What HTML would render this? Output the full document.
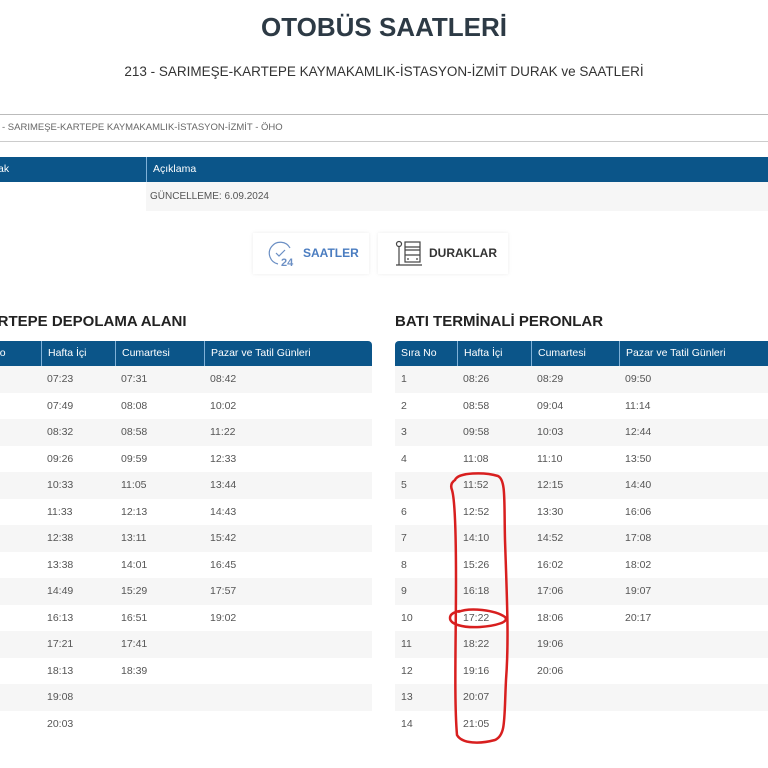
<!DOCTYPE html>
<html><head><meta charset="utf-8"><style>
*{margin:0;padding:0;box-sizing:border-box}
body{width:768px;height:768px;overflow:hidden;background:#fff;font-family:"Liberation Sans",sans-serif;color:#555;position:relative}
.a{position:absolute;white-space:nowrap}
.hd{position:absolute;height:25px;background:#0b5589;color:#fff;font-size:10.5px;border-radius:4px 4px 0 0}
.hd span,.r span{position:absolute;top:0;height:100%;padding-left:6px;line-height:25px}
.hd span{border-left:1px solid #7fb1d8}
.hd span:first-child{border-left:none}
.r{position:absolute;height:26.5px;font-size:10.5px;color:#555}
.r span{line-height:26.5px}
.g{background:#f6f6f6}
.L{left:-36px;width:408px}.R{left:395px;width:380px}
.L span:nth-child(2){left:77px}.L span:nth-child(3){left:151px}.L span:nth-child(4){left:240px}
.R span:nth-child(2){left:62px}.R span:nth-child(3){left:136px}.R span:nth-child(4){left:224px}
.btn{position:absolute;top:233px;height:41px;background:#fff;box-shadow:0 0 4px rgba(0,0,0,.08);font-weight:bold;font-size:12px;line-height:41px}
</style></head><body>
<div class="a" style="left:0;width:768px;top:12px;text-align:center;font-size:26px;font-weight:bold;color:#2d3a45">OTOBÜS SAATLERİ</div>
<div class="a" style="left:0;width:768px;top:64px;text-align:center;font-size:13.5px;color:#333">213 - SARIMEŞE-KARTEPE KAYMAKAMLIK-İSTASYON-İZMİT DURAK ve SAATLERİ</div>
<div class="a" style="left:0;top:114px;width:768px;height:28px;border-top:1px solid #bbb;border-bottom:1px solid #ccc;font-size:9.5px;line-height:26px;padding-left:2px;color:#666">- SARIMEŞE-KARTEPE KAYMAKAMLIK-İSTASYON-İZMİT - ÖHO</div>
<div class="hd" style="left:-10px;top:157px;width:778px;border-radius:0"><span style="left:0;width:156px;padding-left:8px">ak</span><span style="left:156px">Açıklama</span></div>
<div class="a" style="left:146px;top:182px;width:622px;height:29px;background:#f6f6f6;font-size:10px;line-height:29px;padding-left:4px;color:#555">GÜNCELLEME: 6.09.2024</div>
<div class="btn" style="left:253px;width:116px">
<svg style="position:absolute;left:15px;top:7px" width="28" height="28" viewBox="0 0 28 28" fill="none" stroke="#6b8fc4" stroke-width="1.2"><path d="M22 8A11 11 0 1 0 10 24"/><path d="M8 13l3 3 6-6"/><text x="13" y="26" font-size="11" fill="#6b8fc4" stroke="none" font-family="Liberation Sans">24</text></svg>
<span style="position:absolute;left:50px;color:#4a7cc0">SAATLER</span></div>
<div class="btn" style="left:378px;width:130px">
<svg style="position:absolute;left:17px;top:7px" width="28" height="28" viewBox="0 0 28 28" fill="none" stroke="#444" stroke-width="1.2"><circle cx="4" cy="4" r="2.5"/><path d="M4 7v18M1 25h26"/><rect x="10" y="2" width="15" height="20"/><path d="M10 7h15M10 10h15M10 15h15M12 19h2M21 19h2"/></svg>
<span style="position:absolute;left:51px;color:#333">DURAKLAR</span></div>
<div class="a" style="left:-24px;top:313px;font-size:15px;font-weight:bold;color:#222">KARTEPE DEPOLAMA ALANI</div>
<div class="a" style="left:395px;top:313px;font-size:15px;font-weight:bold;color:#222">BATI TERMİNALİ PERONLAR</div>
<div class="hd" style="left:-36px;top:341px;width:408px"><span style="left:0">Sıra No</span><span style="left:77px">Hafta İçi</span><span style="left:151px">Cumartesi</span><span style="left:240px">Pazar ve Tatil Günleri</span></div>
<div class="hd" style="left:395px;top:341px;width:380px"><span style="left:0">Sıra No</span><span style="left:62px">Hafta İçi</span><span style="left:136px">Cumartesi</span><span style="left:224px">Pazar ve Tatil Günleri</span></div>

<div class="r L g" style="top:366px"><span>1</span><span>07:23</span><span>07:31</span><span>08:42</span></div>
<div class="r L" style="top:392.5px"><span>2</span><span>07:49</span><span>08:08</span><span>10:02</span></div>
<div class="r L g" style="top:419px"><span>3</span><span>08:32</span><span>08:58</span><span>11:22</span></div>
<div class="r L" style="top:445.5px"><span>4</span><span>09:26</span><span>09:59</span><span>12:33</span></div>
<div class="r L g" style="top:472px"><span>5</span><span>10:33</span><span>11:05</span><span>13:44</span></div>
<div class="r L" style="top:498.5px"><span>6</span><span>11:33</span><span>12:13</span><span>14:43</span></div>
<div class="r L g" style="top:525px"><span>7</span><span>12:38</span><span>13:11</span><span>15:42</span></div>
<div class="r L" style="top:551.5px"><span>8</span><span>13:38</span><span>14:01</span><span>16:45</span></div>
<div class="r L g" style="top:578px"><span>9</span><span>14:49</span><span>15:29</span><span>17:57</span></div>
<div class="r L" style="top:604.5px"><span>10</span><span>16:13</span><span>16:51</span><span>19:02</span></div>
<div class="r L g" style="top:631px"><span>11</span><span>17:21</span><span>17:41</span><span></span></div>
<div class="r L" style="top:657.5px"><span>12</span><span>18:13</span><span>18:39</span><span></span></div>
<div class="r L g" style="top:684px"><span>13</span><span>19:08</span><span></span><span></span></div>
<div class="r L" style="top:710.5px"><span>14</span><span>20:03</span><span></span><span></span></div>

<div class="r R g" style="top:366px"><span>1</span><span>08:26</span><span>08:29</span><span>09:50</span></div>
<div class="r R" style="top:392.5px"><span>2</span><span>08:58</span><span>09:04</span><span>11:14</span></div>
<div class="r R g" style="top:419px"><span>3</span><span>09:58</span><span>10:03</span><span>12:44</span></div>
<div class="r R" style="top:445.5px"><span>4</span><span>11:08</span><span>11:10</span><span>13:50</span></div>
<div class="r R g" style="top:472px"><span>5</span><span>11:52</span><span>12:15</span><span>14:40</span></div>
<div class="r R" style="top:498.5px"><span>6</span><span>12:52</span><span>13:30</span><span>16:06</span></div>
<div class="r R g" style="top:525px"><span>7</span><span>14:10</span><span>14:52</span><span>17:08</span></div>
<div class="r R" style="top:551.5px"><span>8</span><span>15:26</span><span>16:02</span><span>18:02</span></div>
<div class="r R g" style="top:578px"><span>9</span><span>16:18</span><span>17:06</span><span>19:07</span></div>
<div class="r R" style="top:604.5px"><span>10</span><span>17:22</span><span>18:06</span><span>20:17</span></div>
<div class="r R g" style="top:631px"><span>11</span><span>18:22</span><span>19:06</span><span></span></div>
<div class="r R" style="top:657.5px"><span>12</span><span>19:16</span><span>20:06</span><span></span></div>
<div class="r R g" style="top:684px"><span>13</span><span>20:07</span><span></span><span></span></div>
<div class="r R" style="top:710.5px"><span>14</span><span>21:05</span><span></span><span></span></div>

<svg class="a" style="left:0;top:0" width="768" height="768" fill="none" stroke="#d81f1f" stroke-width="2.5">
<path d="M455 480C458 472 485 472 498 476C506 480 504 500 505 540C507 600 509 640 506 680C504 720 506 735 495 740C480 744 462 744 457 735C454 700 456 640 456 580C456 530 455 500 452 490C450 485 452 482 455 480Z"/>
<path d="M458 612C470 607 495 610 505 617C510 622 495 626 480 627C462 628 450 624 450 618C450 614 454 612 460 611"/>
</svg>
</body></html>
